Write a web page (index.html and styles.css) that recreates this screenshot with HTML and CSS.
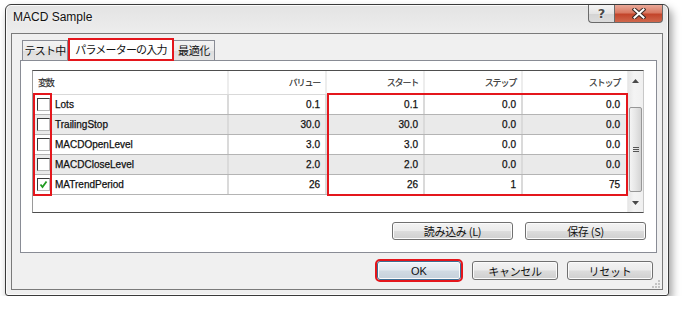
FILE: index.html
```html
<!DOCTYPE html>
<html lang="ja">
<head>
<meta charset="utf-8">
<title>MACD Sample</title>
<link rel="stylesheet" href="styles.css">
</head>
<body>
<div class="window">
  <div class="titlebar">
    <span class="title">MACD Sample</span>
    <div class="caption-buttons">
      <div class="cap-btn help">?</div>
      <div class="cap-btn close">
        <svg width="14" height="11" viewBox="0 0 14 11">
          <path d="M2.5 1.5 L11.5 9.5 M11.5 1.5 L2.5 9.5" stroke="#3b2a26" stroke-width="4" stroke-linecap="square"/>
          <path d="M2.5 1.5 L11.5 9.5 M11.5 1.5 L2.5 9.5" stroke="#ffffff" stroke-width="2" stroke-linecap="square"/>
        </svg>
      </div>
    </div>
  </div>
  <div class="client">
    <div class="tabs">
      <div class="tab">テスト中</div>
      <div class="tab active">パラメーターの入力</div>
      <div class="tab">最適化</div>
    </div>
    <div class="panel">
      <div class="list">
        <div class="grid">
          <div class="row hdr">
            <div class="c name jp">変数</div>
            <div class="c jp">バリュー</div>
            <div class="c jp">スタート</div>
            <div class="c jp">ステップ</div>
            <div class="c last jp">ストップ</div>
          </div>
          <div class="row">
            <div class="c name"><span class="cb"></span>Lots</div>
            <div class="c">0.1</div>
            <div class="c">0.1</div>
            <div class="c">0.0</div>
            <div class="c last">0.0</div>
          </div>
          <div class="row alt">
            <div class="c name"><span class="cb"></span>TrailingStop</div>
            <div class="c">30.0</div>
            <div class="c">30.0</div>
            <div class="c">0.0</div>
            <div class="c last">0.0</div>
          </div>
          <div class="row">
            <div class="c name"><span class="cb"></span>MACDOpenLevel</div>
            <div class="c">3.0</div>
            <div class="c">3.0</div>
            <div class="c">0.0</div>
            <div class="c last">0.0</div>
          </div>
          <div class="row alt">
            <div class="c name"><span class="cb"></span>MACDCloseLevel</div>
            <div class="c">2.0</div>
            <div class="c">2.0</div>
            <div class="c">0.0</div>
            <div class="c last">0.0</div>
          </div>
          <div class="row">
            <div class="c name"><span class="cb checked"><svg width="11" height="11" viewBox="0 0 11 11"><path d="M2.5 5.5 L4.5 8 L8.5 2.5" fill="none" stroke="#1f9a1f" stroke-width="1.8"/></svg></span>MATrendPeriod</div>
            <div class="c">26</div>
            <div class="c">26</div>
            <div class="c">1</div>
            <div class="c last">75</div>
          </div>
        </div>
        <div class="scroll">
          <div class="sb-btn up"><svg width="7" height="4" viewBox="0 0 7 4"><polygon points="0,4 3.5,0 7,4" fill="#4a4a4a"/></svg></div>
          <div class="track">
            <div class="thumb"><span></span><span></span><span></span></div>
          </div>
          <div class="sb-btn down"><svg width="7" height="4" viewBox="0 0 7 4"><polygon points="0,0 7,0 3.5,4" fill="#4a4a4a"/></svg></div>
        </div>
        <div class="mark mark-check"></div>
        <div class="mark mark-values"></div>
      </div>
      <div class="panel-buttons">
        <button class="btn wide">読み込み (L)</button>
        <button class="btn wide">保存 (S)</button>
      </div>
    </div>
    <div class="dialog-buttons">
      <button class="btn ok">OK</button>
      <button class="btn">キャンセル</button>
      <button class="btn">リセット</button>
    </div>
    <svg class="grip" width="8" height="8" viewBox="0 0 8 8">
      <rect x="6" y="0" width="2" height="2" fill="#c4c4c4"/>
      <rect x="3" y="3" width="2" height="2" fill="#c4c4c4"/>
      <rect x="6" y="3" width="2" height="2" fill="#c4c4c4"/>
      <rect x="0" y="6" width="2" height="2" fill="#c4c4c4"/>
      <rect x="3" y="6" width="2" height="2" fill="#c4c4c4"/>
      <rect x="6" y="6" width="2" height="2" fill="#c4c4c4"/>
    </svg>
  </div>
</div>
</body>
</html>
```
FILE: styles.css
```css
* { box-sizing: border-box; }
html, body { margin: 0; padding: 0; background: #ffffff; }
body {
  font-family: "Liberation Sans", "Noto Sans CJK JP", sans-serif;
  color: #1a1a1a;
}

.window {
  margin: 4px 0 0 5px;
  width: 664px;
  height: 292px;
  border: 1px solid #3a3a3a;
  border-radius: 6px 6px 3px 3px;
  background: linear-gradient(#e3e3e3, #ededed 28px, #efefef);
  box-shadow: 3px 5px 8px rgba(0, 0, 0, 0.38), inset 0 0 0 1px #fbfbfb;
  padding: 0 5px 5px 5px;
  display: flex;
  flex-direction: column;
}

.titlebar {
  height: 28px;
  display: flex;
  justify-content: space-between;
  align-items: flex-start;
}
.title {
  padding: 5px 0 0 2px;
  font-size: 12px;
  line-height: 14px;
  color: #111;
  text-shadow: 0 0 4px #ffffff;
}
.caption-buttons { display: flex; }
.cap-btn {
  height: 18px;
  display: flex;
  align-items: center;
  justify-content: center;
  border: 1px solid #6a6a6a;
  border-top: none;
}
.cap-btn.help {
  width: 26px;
  border-right: none;
  border-radius: 0 0 0 4px;
  background: linear-gradient(#f4f4f4, #e4e4e4 50%, #d3d3d3 51%, #dcdcdc);
  font: bold 13px/1 "DejaVu Sans", sans-serif;
  color: #4a4a4a;
  text-shadow: 0 0 2px #fff, 0 0 1px #fff;
}
.cap-btn.close {
  width: 49px;
  border-radius: 0 0 4px 0;
  background: linear-gradient(#e9a898, #d97a63 45%, #c3452b 55%, #d0674c);
}

.client {
  position: relative;
  height: 257px;
  border: 1px solid #7a7a7a;
  background: #f0f0f0;
  padding: 4px 5px 0 8px;
  display: flex;
  flex-direction: column;
}

.tabs {
  height: 22px;
  display: flex;
  align-items: flex-end;
  padding-left: 2px;
  position: relative;
  z-index: 2;
}
.tab {
  height: 20px;
  border: 1px solid #898c95;
  border-bottom: none;
  background: linear-gradient(#f3f3f3, #ebebeb 50%, #dddddd 51%, #e4e4e4);
  font: 11px/18px "Noto Sans CJK JP", sans-serif;
  letter-spacing: -0.8px;
  color: #111;
  padding: 0;
  text-align: center;
  white-space: nowrap;
  overflow: hidden;
}
.tab:first-child { width: 46px; }
.tab:last-child { width: 41px; border-left: none; letter-spacing: -0.3px; }
.tab.active {
  width: 106px;
  height: 23px;
  margin-bottom: -1px;
  border: 2px solid #e4161c;
  background: #ffffff;
  line-height: 19px;
}

.panel {
  width: 637px;
  height: 193px;
  border: 1px solid #898c95;
  background: #ffffff;
  padding: 9px 12px 0 11px;
  display: flex;
  flex-direction: column;
}

.list {
  position: relative;
  width: 612px;
  height: 143px;
  border: 1px solid #9a9a9a;
  border-top-color: #4e4e4e;
  border-bottom-color: #4e4e4e;
  border-right-color: #c8c8c8;
  display: flex;
  background: #ffffff;
}
.grid { width: 594px; }
.row {
  display: grid;
  grid-template-columns: 196px 98px 98px 98px 104px;
  height: 20px;
  border-bottom: 1px solid #b4b4b4;
}
.row.alt { background: #eaeaea; }
.row.hdr {
  height: 24px;
  border-bottom: 1px solid #d9d9d9;
  background: #ffffff;
}
.c {
  display: flex;
  align-items: center;
  justify-content: flex-end;
  padding-right: 5px;
  border-right: 2px solid #dadada;
  font-size: 10px;
  color: #111;
  -webkit-text-stroke: 0.25px #111;
  white-space: nowrap;
}
.c.last { border-right: none; padding-right: 7px; }
.hdr .c { border-right-color: #ededed; }
.hdr .c.last { border-right: none; }
.c.jp {
  font: 9px "Noto Sans CJK JP", sans-serif;
  letter-spacing: -1.2px;
  color: #2a2a2a;
  -webkit-text-stroke: 0.15px #2a2a2a;
}
.c.name {
  justify-content: flex-start;
  padding-left: 4px;
  gap: 5px;
}
.hdr .c.name { padding-left: 5px; }

.cb {
  width: 13px;
  height: 13px;
  flex: none;
  border: 1px solid;
  border-color: #3a3a3a #b8b8b8 #b8b8b8 #3a3a3a;
  background: #ffffff;
  display: flex;
  align-items: center;
  justify-content: center;
}

.scroll {
  width: 16px;
  display: flex;
  flex-direction: column;
  background: linear-gradient(90deg, #e6e6e6, #f4f4f4 40%, #f0f0f0);
  border-left: 1px solid #ececec;
}
.sb-btn {
  display: flex;
  align-items: center;
  justify-content: center;
}
.sb-btn.up { height: 20px; }
.sb-btn.down { height: 18px; }
.track { height: 103px; padding-top: 16px; }
.thumb {
  height: 85px;
  margin: 0 1px;
  border: 1px solid #979797;
  border-radius: 2px;
  background: linear-gradient(90deg, #f4f4f4, #e6e6e6 50%, #d4d4d4);
  display: flex;
  flex-direction: column;
  align-items: center;
  justify-content: center;
  gap: 1px;
}
.thumb span { width: 6px; height: 1px; background: #555; }

.mark {
  position: absolute;
  border: 2px solid #e4161c;
  pointer-events: none;
}
.mark-check { left: 0; top: 22px; width: 19px; height: 103px; }
.mark-values { left: 294px; top: 22px; width: 301px; height: 103px; }

.btn {
  height: 18px;
  padding: 0;
  border: 1px solid #707070;
  border-radius: 3px;
  background: linear-gradient(#f3f3f3, #ebebeb 48%, #dcdcdc 52%, #cfcfcf);
  box-shadow: inset 0 0 0 1px #fbfbfb;
  font: 11px/14px "Noto Sans CJK JP", sans-serif;
  color: #111;
  letter-spacing: -0.3px;
}
.panel-buttons {
  display: flex;
  justify-content: flex-end;
  gap: 12px;
  margin: 9px -2px 0 0;
}
.btn.wide { width: 121px; }

.dialog-buttons {
  display: flex;
  justify-content: flex-end;
  gap: 9px;
  margin-top: 8px;
  padding-right: 4px;
}
.dialog-buttons .btn { width: 86px; height: 19px; }
.btn.ok {
  width: 84px;
  margin-right: 2px;
  outline: 2px solid #e4161c;
  border-color: #3c6e94;
  background: linear-gradient(#eef3f7, #e2e9ef 48%, #d0dae3 52%, #c6d1db);
  font-family: "Liberation Sans", sans-serif;
  letter-spacing: 0;
}

.grip {
  position: absolute;
  right: 2px;
  bottom: 1px;
}
```
